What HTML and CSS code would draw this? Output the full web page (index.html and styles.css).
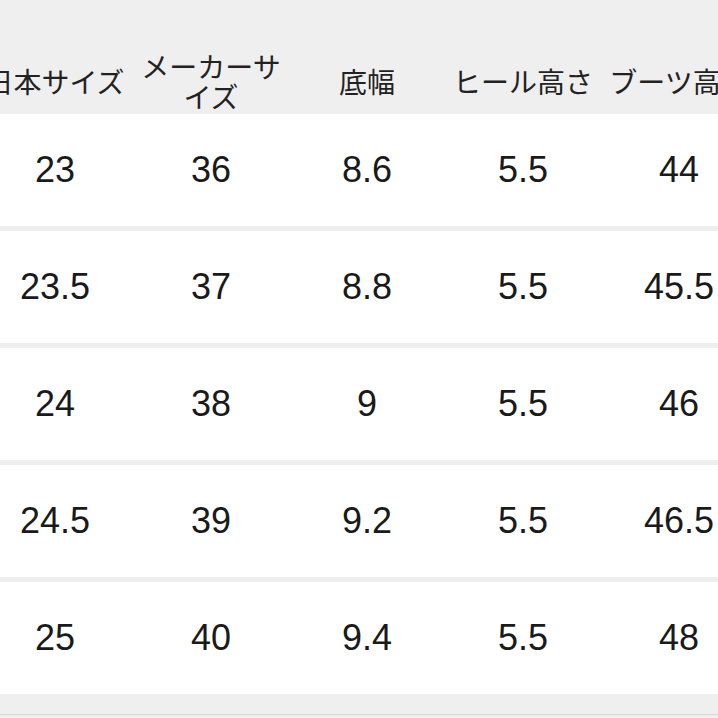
FILE: index.html
```html
<!DOCTYPE html>
<html lang="ja">
<head>
<meta charset="utf-8">
<link rel="stylesheet" href="styles.css">
</head>
<body>
<div class="table">
  <div class="head">
    <div class="hcell">日本サイズ</div>
    <div class="hcell">メーカーサイズ</div>
    <div class="hcell">底幅</div>
    <div class="hcell">ヒール高さ</div>
    <div class="hcell">ブーツ高さ</div>
  </div>
  <div class="body">
    <div class="row"><div>23</div><div>36</div><div>8.6</div><div>5.5</div><div>44</div></div>
    <div class="row"><div>23.5</div><div>37</div><div>8.8</div><div>5.5</div><div>45.5</div></div>
    <div class="row"><div>24</div><div>38</div><div>9</div><div>5.5</div><div>46</div></div>
    <div class="row"><div>24.5</div><div>39</div><div>9.2</div><div>5.5</div><div>46.5</div></div>
    <div class="row"><div>25</div><div>40</div><div>9.4</div><div>5.5</div><div>48</div></div>
  </div>
  <div class="foot"></div>
</div>
</body>
</html>
```
FILE: styles.css
```css
html, body {
  margin: 0;
  padding: 0;
  background: #efefef;
  overflow: hidden;
  width: 718px;
  height: 718px;
}
.table {
  margin-left: -23px;
  width: 780px;
  font-family: "Liberation Sans", "Noto Sans CJK JP", sans-serif;
  color: #1a1a1a;
}
.head {
  display: grid;
  grid-template-columns: repeat(5, 156px);
  height: 114px;
  box-sizing: border-box;
  padding-top: 48px;
  align-items: center;
  background: #efefef;
}
.hcell {
  font-family: "Noto Sans CJK JP", sans-serif;
  font-size: 28px;
  line-height: 30px;
  text-align: center;
  padding: 0 4px;
  color: #222;
}
.hcell:last-child {
  white-space: nowrap;
}
.body {
  display: flex;
  flex-direction: column;
  gap: 5px;
}
.row {
  display: grid;
  grid-template-columns: repeat(5, 156px);
  height: 112px;
  align-items: center;
  background: #ffffff;
  font-size: 36px;
  text-align: center;
}
.foot {
  height: 20px;
  border-bottom: 1px solid #d9d9d9;
}
```
